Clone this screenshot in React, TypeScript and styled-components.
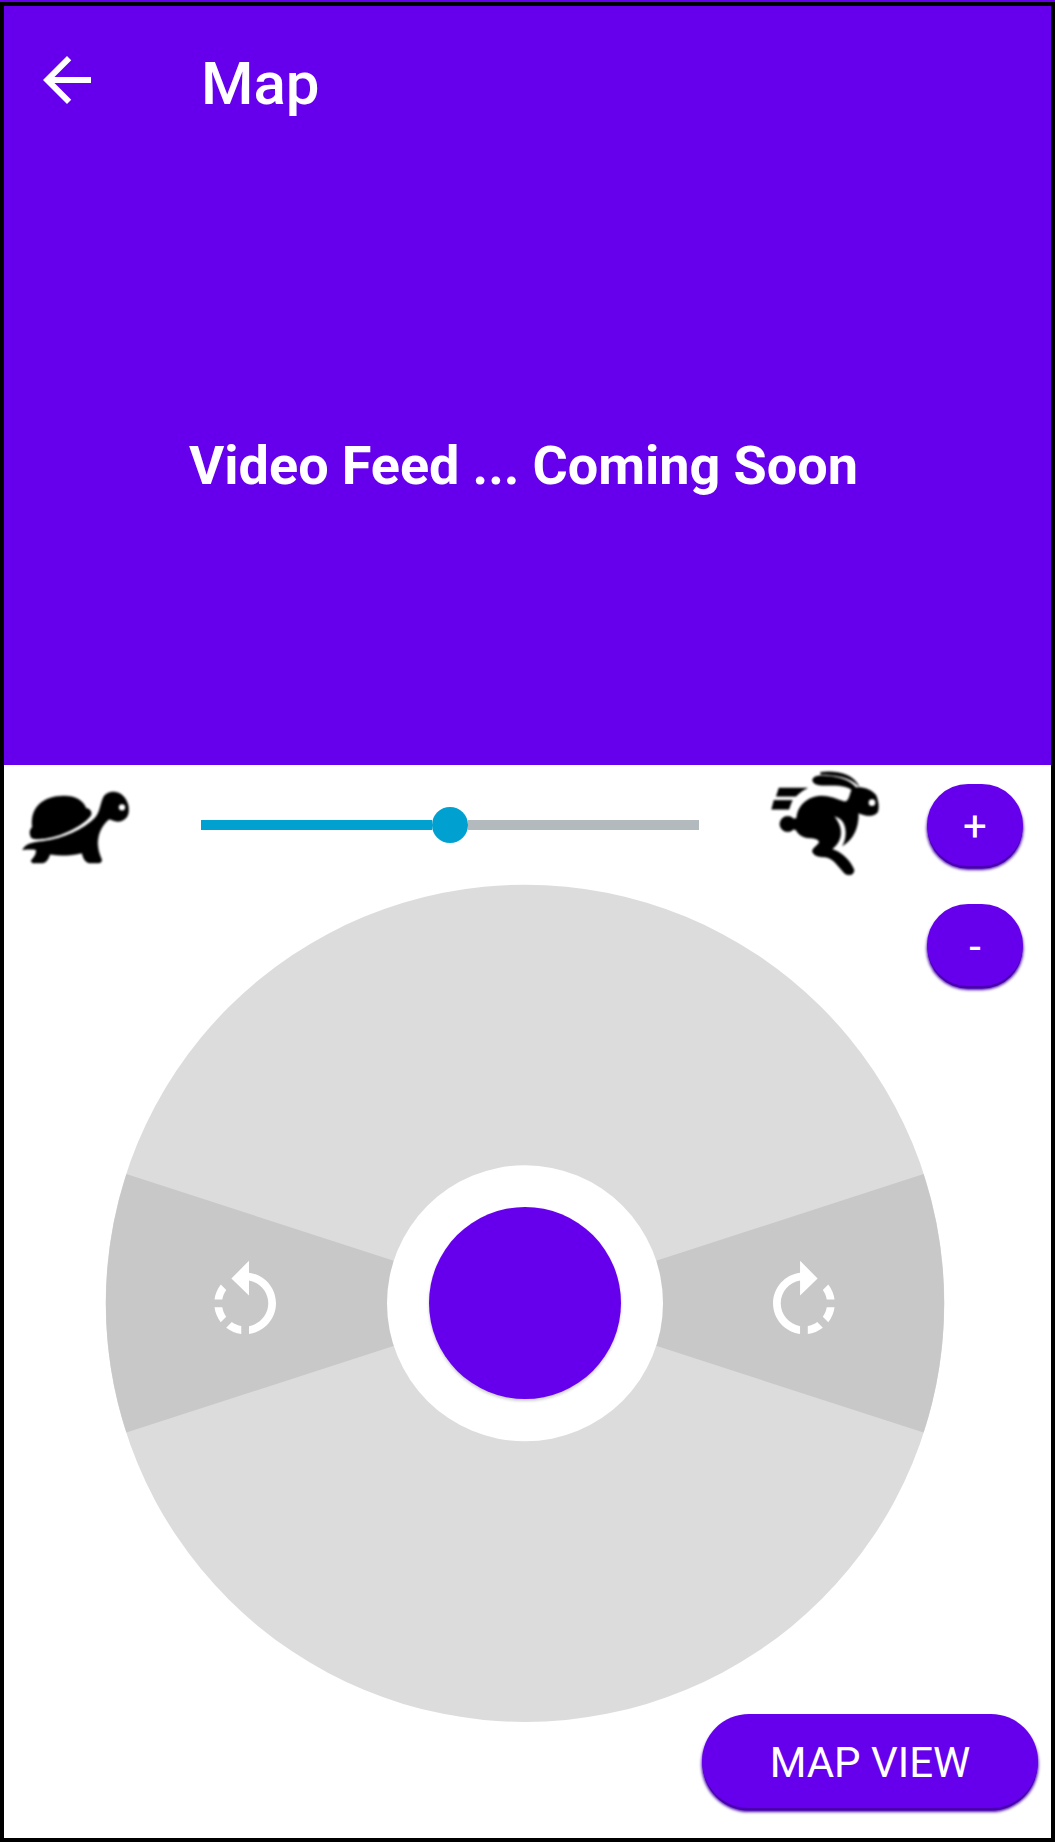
import React from "react";
import styled, { createGlobalStyle } from "styled-components";

const purple = "#6600ec";

const GlobalStyle = createGlobalStyle`
  * { box-sizing: border-box; }
  body { margin: 0; background: ${purple}; font-family: Roboto, "Noto Sans", sans-serif; }
  button { font-family: inherit; border: 0; padding: 0; margin: 0; }
  svg { display: block; }
`;

const Screen = styled.main`
  display: flex;
  flex-direction: column;
  width: 1055px;
  height: 1840px;
  margin-top: 2px;
  border: 4px solid #000;
  background: #fff;
`;

const VideoPanel = styled.section`
  display: flex;
  flex-direction: column;
  height: 759px;
  background: ${purple};
  color: #fff;
`;

const AppBar = styled.header`
  display: flex;
  align-items: center;
  height: 148px;
  padding-left: 27px;
`;

const BackButton = styled.button`
  width: 72px;
  height: 72px;
  background: none;
  color: #fff;
`;

const Title = styled.h1`
  margin: 7px 0 0 98px;
  font-size: 60px;
  line-height: 70px;
  font-weight: 500;
`;

const FeedMessage = styled.p`
  margin: 280px 0 0 185px;
  font-size: 54px;
  line-height: 64px;
  font-weight: 700;
  word-spacing: -0.4px;
  white-space: nowrap;
`;

const Controls = styled.section`
  display: grid;
  grid-template-columns: 1fr;
  grid-template-rows: 120px 1fr;
  flex: 1;
`;

const SpeedRow = styled.div`
  grid-area: 1 / 1;
  display: flex;
  align-items: flex-start;
  padding-left: 16px;
`;

const Animal = styled.svg<{ $top: number; $h: number }>`
  flex: none;
  width: 113.33px;
  height: ${(p) => p.$h}px;
  margin-top: ${(p) => p.$top}px;
  stroke: #000;
  stroke-width: 1.5;
  stroke-linejoin: round;
  filter: blur(1px);
`;

const Slider = styled.div`
  display: flex;
  align-items: center;
  width: 498px;
  height: 36px;
  margin: 42px 71px 0 67.7px;
`;

const Track = styled.div<{ $active?: boolean }>`
  flex: 1;
  height: 10px;
  background: ${(p) => (p.$active ? "#00a0d0" : "#b2babd")};
`;

const Thumb = styled.div`
  width: 36px;
  height: 36px;
  border-radius: 50%;
  background: #00a0d0;
`;

const PillButton = styled.button<{ $w: number; $h: number }>`
  width: ${(p) => p.$w}px;
  height: ${(p) => p.$h}px;
  padding-top: 3px;
  border-radius: ${(p) => p.$h / 2}px;
  background: ${purple};
  color: #fff;
  font-size: 42px;
  font-weight: 400;
  line-height: 1;
  box-shadow: 0 3px 0 -0.5px #4a00b0, 0 3.5px 3px 0.5px rgba(66, 0, 165, 0.95);
`;

const ZoomColumn = styled.div`
  grid-area: 1 / 1 / 3 / 2;
  justify-self: end;
  align-self: start;
  display: flex;
  flex-direction: column;
  gap: 38px;
  padding: 19px 28px 0 0;
`;

const Wheel = styled.div`
  grid-area: 2 / 1;
  display: grid;
  place-items: center;
  width: 838px;
  height: 836px;
  margin-left: 102px;

  > * {
    grid-area: 1 / 1;
  }
`;

const DiscDrawing = styled.svg`
  overflow: visible;
`;

const Knob = styled.button`
  width: 192px;
  height: 192px;
  border-radius: 50%;
  background: ${purple};
  box-shadow: 0 2px 3px rgba(0, 0, 0, 0.2);
`;

const MapAction = styled.div`
  grid-area: 2 / 1;
  align-self: end;
  justify-self: end;
  padding: 0 13px 30px 0;
`;

const Turtle = () => (
  <Animal $top={21.5} $h={80} viewBox="60 110 340 240">
    <path d="M94 262C88 250 88 240 97 230C90 170 130 138 190 137C230 136 252 155 258 174C270 176 277 184 272 196C250 225 180 262 125 265C110 267 100 266 94 262Z" />
    <path d="M68 298C78 280 95 277 130 273C190 265 250 238 285 203C302 185 300 160 312 138C322 122 350 120 366 134C382 148 390 172 384 192C378 210 360 216 345 212C336 210 331 205 327 207C305 225 293 250 293 280C294 302 300 315 305 328C306 335 300 338 294 338L268 338C256 336 250 325 246 308C215 316 180 317 150 312C145 325 140 337 128 338L98 338C92 334 92 330 98 325C106 316 110 308 108 298C95 296 80 297 68 298Z" />
    <circle cx="366" cy="171" r="9.5" fill="#fff" stroke="none" />
  </Animal>
);

const Rabbit = () => (
  <Animal $top={1.5} $h={113.33} viewBox="60 50 340 340">
    <path d="M87 113H172C158 120 148 128 138 138H79ZM72 150H127C122 160 120 168 117 177H65Z" />
    <circle cx="113" cy="221" r="23.5" />
    <path d="M130 206L140 204C142 165 175 137 215 137C250 138 270 152 285 154C298 152 300 130 305 118C285 103 250 105 215 105C198 104 187 98 188 88C190 78 205 75 225 77C265 78 300 90 318 112C340 110 365 118 378 135C386 155 387 172 383 185C375 197 355 198 343 194C335 192 330 190 325 188C326 230 312 265 278 286C295 255 292 205 252 198C275 225 285 265 246 297C275 305 300 330 312 358C313 372 300 378 285 370C265 350 250 322 225 320C205 320 190 316 187 302C190 290 205 285 208 275C203 263 190 264 170 262C155 260 143 250 139 240L130 236Z" />
    <path d="M212 66C255 60 310 70 327 108C300 80 260 75 212 72Z" />
    <circle cx="366" cy="157" r="10" fill="#fff" stroke="none" />
  </Animal>
);

const Disc = () => (
  <DiscDrawing width="838" height="836" viewBox="-419 -418.3 838 836">
    <ellipse rx="419.3" ry="418.6" fill="#dcdcdc" />
    <path
      fill="#c8c8c8"
      d="M0 0L-398.6 -129.3A419.3 418.6 0 0 0 -398.6 129.3ZM0 0L398.6 -129.3A419.3 418.6 0 0 1 398.6 129.3Z"
    />
    <circle r="138" fill="#fff" />
    <g fill="#fff">
      <path
        transform="translate(-326.2 -46.3) scale(3.86)"
        d="M7.11 8.53L5.7 7.11C4.8 8.27 4.24 9.61 4.07 11h2.02c.14-.87.49-1.72 1.02-2.47zM6.09 13H4.07c.17 1.39.72 2.73 1.62 3.89l1.41-1.42c-.52-.75-.87-1.59-1.01-2.47zm1.01 5.32c1.16.9 2.51 1.44 3.9 1.61V17.9c-.87-.15-1.71-.49-2.46-1.03L7.1 18.32zM13 4.07V1L8.45 5.55 13 10V6.09c2.84.48 5 2.94 5 5.91s-2.16 5.43-5 5.91v2.02c3.95-.49 7-3.85 7-7.93s-3.05-7.44-7-7.93z"
      />
      <path
        transform="translate(232.6 -46.3) scale(3.86)"
        d="M15.55 5.55L11 1v3.07C7.06 4.56 4 7.92 4 12s3.05 7.44 7 7.93v-2.02c-2.84-.48-5-2.94-5-5.91s2.16-5.43 5-5.91V10l4.55-4.45zM19.93 11c-.17-1.39-.72-2.73-1.62-3.89l-1.42 1.42c.54.75.88 1.6 1.02 2.47h2.02zM13 17.9v2.02c1.39-.17 2.74-.71 3.9-1.61l-1.44-1.44c-.75.54-1.59.89-2.46 1.03zm3.89-2.42l1.42 1.41c.9-1.16 1.45-2.5 1.62-3.89h-2.02c-.14.87-.48 1.72-1.02 2.48z"
      />
    </g>
  </DiscDrawing>
);

export default function App() {
  return (
    <>
      <GlobalStyle />
      <Screen>
        <VideoPanel>
          <AppBar>
            <BackButton aria-label="Back">
              <svg width="72" height="72" viewBox="0 0 24 24" fill="currentColor">
                <path d="M20 11H7.83l5.59-5.59L12 4l-8 8 8 8 1.41-1.41L7.83 13H20v-2z" />
              </svg>
            </BackButton>
            <Title>Map</Title>
          </AppBar>
          <FeedMessage>Video Feed ... Coming Soon</FeedMessage>
        </VideoPanel>
        <Controls>
          <SpeedRow>
            <Turtle />
            <Slider>
              <Track $active />
              <Thumb />
              <Track />
            </Slider>
            <Rabbit />
          </SpeedRow>
          <Wheel>
            <Disc />
            <Knob aria-label="Drive" />
          </Wheel>
          <ZoomColumn>
            <PillButton $w={96} $h={82}>+</PillButton>
            <PillButton $w={96} $h={82}>-</PillButton>
          </ZoomColumn>
          <MapAction>
            <PillButton $w={336} $h={94}>MAP VIEW</PillButton>
          </MapAction>
        </Controls>
      </Screen>
    </>
  );
}
